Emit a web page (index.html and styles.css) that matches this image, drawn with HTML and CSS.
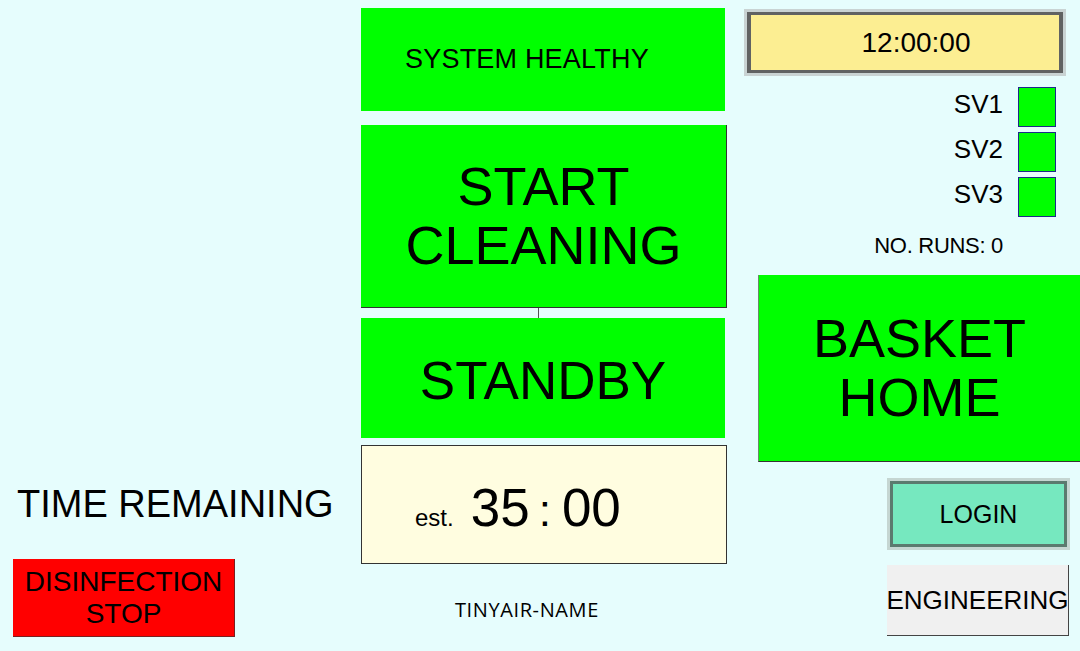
FILE: index.html
```html
<!DOCTYPE html>
<html>
<head>
<meta charset="utf-8">
<link rel="stylesheet" href="styles.css">
</head>
<body>
<div class="screen">
  <div class="col-left">
    <div class="time-label">TIME REMAINING</div>
    <div class="btn-stop">DISINFECTION<br>STOP</div>
  </div>
  <div class="col-mid">
    <div class="health">SYSTEM HEALTHY</div>
    <div class="big-btn start">START<br>CLEANING</div>
    <div class="connector"></div>
    <div class="big-btn standby">STANDBY</div>
    <div class="timer">
      <span class="est">est.</span>
      <span class="digits">35</span>
      <span class="colon">:</span>
      <span class="digits">00</span>
    </div>
    <div class="name">TINYAIR-NAME</div>
  </div>
  <div class="col-right">
    <div class="clock">12:00:00</div>
    <div class="sv-list">
      <div class="sv-row"><span>SV1</span><div class="sv-box"></div></div>
      <div class="sv-row"><span>SV2</span><div class="sv-box"></div></div>
      <div class="sv-row"><span>SV3</span><div class="sv-box"></div></div>
    </div>
    <div class="runs">NO. RUNS: 0</div>
    <div class="big-btn basket">BASKET<br>HOME</div>
    <div class="login">LOGIN</div>
    <div class="eng">ENGINEERING</div>
  </div>
</div>
</body>
</html>
```

FILE: styles.css
```css
html, body {
  margin: 0;
  padding: 0;
}
body {
  width: 1080px;
  height: 651px;
  overflow: hidden;
  background: #e6fdfd;
  font-family: "Liberation Sans", Arial, sans-serif;
  color: #000;
}
.screen {
  display: grid;
  grid-template-columns: 361px 366px 1fr;
  height: 651px;
}

/* left column */
.col-left {
  display: flex;
  flex-direction: column;
  justify-content: flex-end;
  padding-bottom: 14px;
}
.time-label {
  font-size: 38px;
  line-height: 44px;
  margin-left: 17px;
  white-space: nowrap;
}
.btn-stop {
  margin-top: 33px;
  margin-left: 13px;
  width: 222px;
  height: 78px;
  box-sizing: border-box;
  background: #ff0000;
  border-right: 1px solid #7a2020;
  border-bottom: 1px solid #7a2020;
  display: flex;
  align-items: center;
  justify-content: center;
  text-align: center;
  font-size: 28px;
  line-height: 32px;
}

/* middle column */
.col-mid {
  display: flex;
  flex-direction: column;
  padding-top: 8px;
}
.health {
  height: 103px;
  background: #00ff00;
  display: flex;
  align-items: center;
  padding-left: 44px;
  font-size: 27px;
  letter-spacing: 0.2px;
  width: 364px;
  box-sizing: border-box;
}
.big-btn {
  background: #00ff00;
  display: flex;
  align-items: center;
  justify-content: center;
  text-align: center;
  box-sizing: border-box;
}
.start {
  margin-top: 14px;
  height: 183px;
  font-size: 54px;
  line-height: 59px;
  border-right: 1px solid #333;
  border-bottom: 1px solid #333;
}
.connector {
  width: 1px;
  height: 10px;
  margin-left: 177px;
  background: #555;
}
.standby {
  height: 120px;
  width: 364px;
  font-size: 53px;
  padding-top: 4px;
}
.timer {
  margin-top: 7px;
  height: 119px;
  box-sizing: border-box;
  background: #fffde0;
  border: 1px solid #333;
  display: flex;
  align-items: baseline;
  padding-left: 53px;
  padding-top: 34px;
}
.est {
  font-size: 24px;
  margin-right: 17px;
}
.digits {
  font-size: 53px;
  line-height: 56px;
}
.colon {
  font-size: 44px;
  margin: 0 11px 0 9px;
}
.name {
  margin-top: 35px;
  margin-left: 94px;
  font-family: "Open Sans", "Noto Sans", sans-serif;
  font-size: 20px;
  line-height: 22px;
  letter-spacing: 0.6px;
}

/* right column */
.col-right {
  display: flex;
  flex-direction: column;
  padding-top: 12px;
}
.clock {
  margin-left: 20px;
  width: 316px;
  height: 61px;
  box-sizing: border-box;
  background: #fcee92;
  border: 3px solid #606262;
  border-left-width: 4px;
  border-right-width: 4px;
  box-shadow: 0 0 0 3px #c9d3d3;
  display: flex;
  align-items: center;
  justify-content: center;
  padding-left: 22px;
  font-size: 28px;
}
.sv-list {
  margin-top: 14px;
  display: flex;
  flex-direction: column;
  align-items: flex-end;
  gap: 5px;
  padding-right: 24px;
}
.sv-row {
  display: flex;
  align-items: center;
  gap: 15px;
  font-size: 26px;
}
.sv-row span {
  margin-top: -6px;
}
.sv-box {
  width: 38px;
  height: 40px;
  box-sizing: border-box;
  background: #00ff00;
  border: 1px solid #1c2a8a;
}
.runs {
  margin-top: 16px;
  align-self: flex-end;
  margin-right: 77px;
  font-size: 22px;
  line-height: 26px;
  letter-spacing: -0.3px;
}
.basket {
  margin-top: 16px;
  margin-left: 31px;
  height: 187px;
  font-size: 54px;
  line-height: 59px;
  border-left: 1px solid #6a8a6a;
  border-bottom: 1px solid #333;
}
.login {
  margin-top: 19px;
  margin-left: 163px;
  width: 177px;
  height: 66px;
  box-sizing: border-box;
  background: #76e8bf;
  border: 3px solid #5b7a6f;
  box-shadow: 0 0 0 3px #c5d6d2;
  display: flex;
  align-items: center;
  justify-content: center;
  font-size: 25px;
}
.eng {
  margin-top: 18px;
  margin-left: 160px;
  width: 182px;
  height: 71px;
  box-sizing: border-box;
  background: #f0f0f0;
  border-right: 1px solid #444;
  border-bottom: 1px solid #444;
  display: flex;
  align-items: center;
  justify-content: center;
  font-size: 26px;
  white-space: nowrap;
}
```
